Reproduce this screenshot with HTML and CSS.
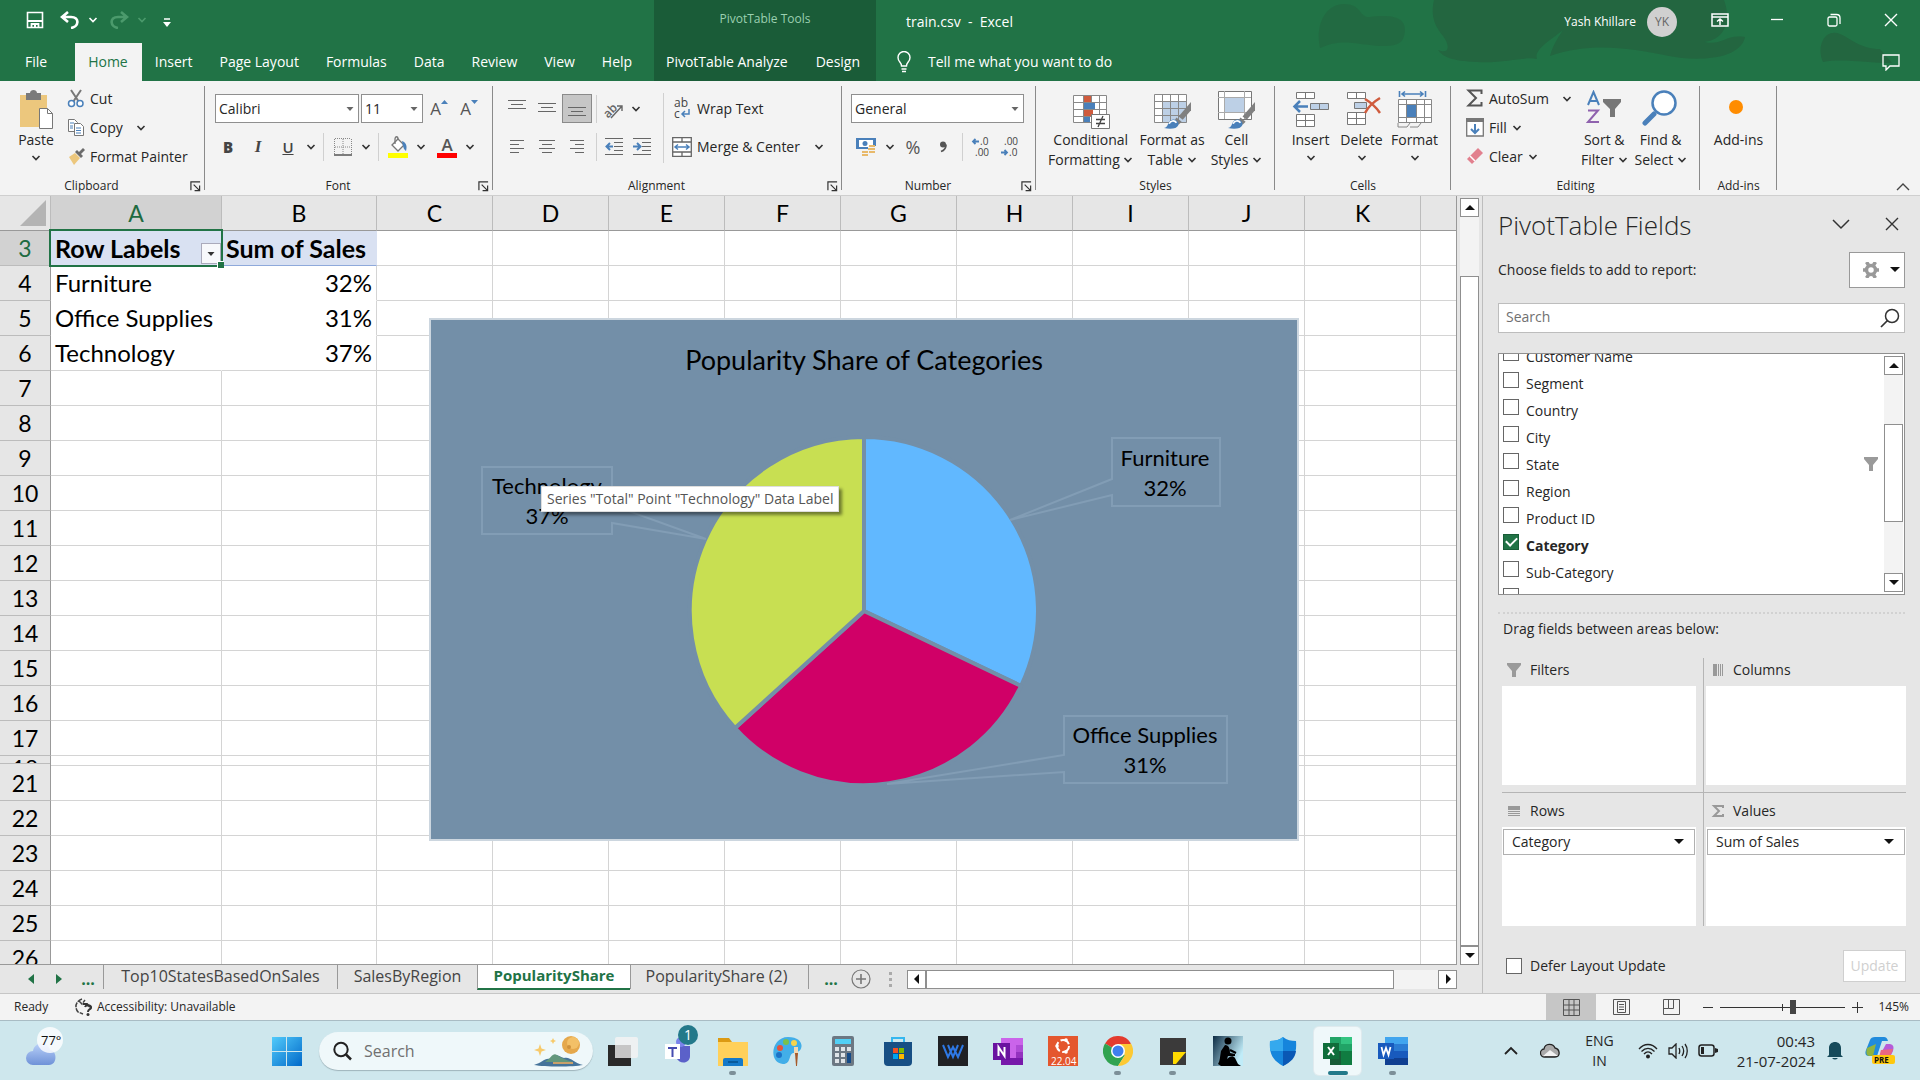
FILE: index.html
```html
<!DOCTYPE html>
<html lang="en">
<head>
<meta charset="utf-8">
<title>train.csv - Excel</title>
<link rel="stylesheet" href="styles.css">
</head>
<body>
<svg class="sprite" aria-hidden="true">
  <symbol id="chev" viewBox="0 0 10 10"><path d="M1.5 3l3.5 3.6L8.500 3" fill="none" stroke="currentColor" stroke-width="1.600"/></symbol>
  <symbol id="tri" viewBox="0 0 10 10"><path d="M1.500 3h7L5 7z" fill="currentColor"/></symbol>
  <symbol id="launch" viewBox="0 0 12 12"><path d="M1 10V1h10M4 4l6 6M10.500 5v5.500H5" fill="none" stroke="#333" stroke-width="1.300"/></symbol>
  <symbol id="funnel" viewBox="0 0 14 14"><path d="M0 0h14v2L9 8v6H5V8L0 2z" fill="#9a9a9a"/></symbol>
  <symbol id="brush" viewBox="0 0 26 26"><path d="M26 0v8l-8 9-4-3z" fill="#808080"/><path d="M12 15l5 4-3 3-4-4z" fill="#808080"/><path d="M0 25c5-1 3-7 8-8s9 5 3 8c-3 1-7 1-11 0z" fill="#4a80ba"/><path d="M5 21c1-3 5-4 7-1" fill="none" stroke="#fff" stroke-width="1.500"/></symbol>
</svg>

<header class="titlebar">
  <svg class="blobs" viewBox="0 0 620 81" aria-hidden="true"><g fill="#24633f"><path d="M20 48c-5-22 5-44 24-44 18 0 15 14 26 13 16-2 40-3 34 19-2 10-14 10-23 10-27-2-40-8-61 2z" opacity=".6"/><path d="M134 0h290c8 22 0 40-20 42 20 4 20-8 41-5-5 24-51 24-76 19-40-8-78-14-119 0 4-14 9-19 13-26-9 8-30 19-26 29-12-3-35 5-60 3-25-1-34-5-39-12 12 5 12-5 5-14-10-12-12-22-9-36z"/><path d="M523 62c-7-16 2-34 17-28 10 4 20 15 40 15l12 14c-25 0-50-5-69-1z"/></g></svg>
  <div class="main-tabs">
    <div class="qat">
      <button aria-label="Save"><svg width="18" height="18" viewBox="0 0 18 18"><path d="M1.500 1.500h15v15h-15z" fill="none" stroke="#fff" stroke-width="1.600"/><path d="M2 10h14M5.500 17v-4h7v4" fill="none" stroke="#fff" stroke-width="1.800"/><path d="M8 13h2v4H8z" fill="#fff"/></svg></button>
      <button aria-label="Undo"><svg width="20" height="18" viewBox="0 0 20 18"><path d="M8 1L2 6l6 5M2 6h9c9 0 8 10 0 11" fill="none" stroke="#fff" stroke-width="2.600"/></svg></button>
      <button class="list-btn" aria-label="Undo list"><svg class="ch"><use href="#chev"/></svg></button>
      <button class="dim" aria-label="Redo"><svg width="20" height="18" viewBox="0 0 20 18"><path d="M12 1l6 5-6 5M18 6H9C0 6 1 16 9 17" fill="none" stroke="currentColor" stroke-width="2.600"/></svg></button>
      <button class="dim list-btn" aria-label="Redo list"><svg class="ch"><use href="#chev"/></svg></button>
      <button class="custom" aria-label="Customize toolbar"><svg width="8" height="10" viewBox="0 0 8 10"><path d="M1 1h6" stroke="#fff" stroke-width="1.500"/><path d="M0 4h8L4 9z" fill="#fff"/></svg></button>
    </div>
    <nav class="tabs">
      <a class="file" href="#">File</a><a class="on" href="#">Home</a><a href="#">Insert</a><a href="#">Page Layout</a><a href="#">Formulas</a><a href="#">Data</a><a href="#">Review</a><a href="#">View</a><a href="#">Help</a>
    </nav>
  </div>
  <div class="context-tabs">
    <div class="context-name">PivotTable Tools</div>
    <nav class="tabs"><a href="#">PivotTable Analyze</a><a href="#">Design</a></nav>
  </div>
  <div class="title-rest">
    <div class="title-row">
      <span class="doc">train.csv&nbsp; -&nbsp; Excel</span>
      <span class="user">Yash Khillare</span><span class="avatar">YK</span>
      <div class="winbtns">
        <button aria-label="Ribbon display options"><svg width="18" height="14" viewBox="0 0 18 14"><path d="M1 1h16v12H1zM1 4h16M9 12V6M6 8.500L9 6l3 2.500" fill="none" stroke="#fff" stroke-width="1.500"/></svg></button>
        <button aria-label="Minimize"><svg width="14" height="14" viewBox="0 0 14 14"><path d="M1 6.500h12" stroke="#fff" stroke-width="1.300"/></svg></button>
        <button aria-label="Restore"><svg width="14" height="14" viewBox="0 0 14 14"><rect x="1" y="4" width="9" height="9" rx="1.500" fill="none" stroke="#fff" stroke-width="1.300"/><path d="M3.500 1.500h6q3.500 0 3.500 3.500v6" fill="none" stroke="#fff" stroke-width="1.300"/></svg></button>
        <button aria-label="Close"><svg width="14" height="14" viewBox="0 0 14 14"><path d="M1 1l12 12M13 1L1 13" stroke="#fff" stroke-width="1.400"/></svg></button>
      </div>
    </div>
    <div class="tell-row">
      <svg width="14" height="22" viewBox="0 0 14 22"><path d="M4.500 15c0-4-3.500-4-3.500-8.500a6 6 0 0 1 12 0C13 11 9.500 11 9.500 15zM4.500 18h5M5 20.500h4" fill="none" stroke="#fff" stroke-width="1.400"/></svg>
      <a href="#">Tell me what you want to do</a>
      <button class="comment" aria-label="Comments"><svg width="18" height="17" viewBox="0 0 18 17"><path d="M1 1h16v11H8l-4 4v-4H1z" fill="none" stroke="#fff" stroke-width="1.300"/></svg></button>
    </div>
  </div>
</header>

<section class="ribbon" aria-label="Home">
  <div class="group g-clip">
    <div class="body">
      <button class="big"><svg width="36" height="40" viewBox="0 0 36 40"><path d="M2 5h27v32H2z" fill="#ecc77d"/><path d="M8 3h4c0-4 7-4 7 0h4v7H8z" fill="#7a7a7a"/><path d="M21.500 18.500h8l5 5v15h-13z" fill="#fff" stroke="#777"/><path d="M29.500 18.500v5h5" fill="none" stroke="#777"/></svg><span>Paste</span><svg class="ch"><use href="#chev"/></svg></button>
      <div class="stack">
        <button><svg width="18" height="19" viewBox="0 0 18 19"><path d="M4 1l8 12M14 1L6 13" stroke="#777" stroke-width="2"/><g fill="#fff" stroke="#4a80ba" stroke-width="1.500"><circle cx="4.500" cy="14.500" r="3"/><circle cx="13" cy="14.500" r="3"/></g></svg>Cut</button>
        <button><svg width="18" height="19" viewBox="0 0 18 19"><g fill="#fff" stroke="#777"><path d="M1.500 1.500h6l3 3v9h-9z"/><path d="M7.500 5.500h6l3 3v9h-9z"/></g><path d="M3 5h4M3 8h3M3 10h3M9 10h5M9 12.500h5M9 15h5" stroke="#4a80ba"/></svg>Copy<svg class="ch far"><use href="#chev"/></svg></button>
        <button><svg width="18" height="19" viewBox="0 0 18 19"><path d="M2 10l6-4 5 5-6 7z" fill="#ecc77d"/><path d="M8 5l2-2 2 2 4-4 2 2-4 4 2 2-2 2z" fill="#6b6b6b"/></svg>Format Painter</button>
      </div>
    </div>
    <div class="label">Clipboard<button class="launch" aria-label="Clipboard settings"><svg><use href="#launch"/></svg></button></div>
  </div>
  <div class="group g-font">
    <div class="body rows">
      <div class="line combos">
        <button class="combo w-font">Calibri<svg class="ch"><use href="#tri"/></svg></button><button class="combo w-size">11<svg class="ch"><use href="#tri"/></svg></button>
        <button class="ib grow">A<svg width="7" height="5" viewBox="0 0 7 5"><path d="M0 4l3.500-4L7 4z" fill="#4a80ba"/></svg></button>
        <button class="ib grow">A<svg width="7" height="5" viewBox="0 0 7 5"><path d="M0 0l3.500 4L7 0z" fill="#4a80ba"/></svg></button>
      </div>
      <div class="line">
        <button class="ib glyph"><b>B</b></button><button class="ib glyph serif"><i>I</i></button><button class="ib glyph"><u>U</u></button><button class="dd" aria-label="Underline list"><svg class="ch"><use href="#chev"/></svg></button><span class="sep"></span>
        <button class="ib" aria-label="Borders"><svg width="18" height="18" viewBox="0 0 18 18"><path d="M.5 1v16M17.500 1v16M1 .5h16M9 1v16M1 9h16" stroke="#888" stroke-dasharray="1 1" fill="none"/><path d="M0 17h18" stroke="#555" stroke-width="1.500"/></svg></button><button class="dd" aria-label="Borders list"><svg class="ch"><use href="#chev"/></svg></button><span class="sep"></span>
        <button class="ib" aria-label="Fill colour"><svg width="22" height="22" viewBox="0 0 22 22"><path d="M5 9l6-6 6 6-6 6z" fill="#fff" stroke="#777" stroke-width="1.300"/><path d="M8 8V3c0-3 3-3 3 0" fill="none" stroke="#777" stroke-width="1.300"/><path d="M15 5c5 2 5 6 4 10-2-1-3-4-4-10z" fill="#4a80ba"/><path d="M1 17h20v5H1z" fill="#ff0"/></svg></button><button class="dd" aria-label="Fill list"><svg class="ch"><use href="#chev"/></svg></button>
        <button class="ib fontcolor">A</button><button class="dd" aria-label="Font colour list"><svg class="ch"><use href="#chev"/></svg></button>
      </div>
    </div>
    <div class="label">Font<button class="launch" aria-label="Font settings"><svg><use href="#launch"/></svg></button></div>
  </div>
  <div class="group g-align">
    <div class="body">
      <div class="rows left">
        <div class="line">
          <button class="ib" aria-label="Top align"><svg class="al"><path d="M0 1.500h18M3 5.500h12M0 9.500h18"/></svg></button><button class="ib" aria-label="Middle align"><svg class="al"><path d="M0 4.500h18M3 8.500h12M0 12.500h18"/></svg></button><button class="ib pressed" aria-label="Bottom align"><svg class="al"><path d="M0 8.500h18M3 12.500h12M0 16.500h18"/></svg></button><span class="sep"></span>
          <button class="ib slim" aria-label="Orientation"><svg width="20" height="20" viewBox="0 0 20 20"><text x="-1" y="16" transform="rotate(-45 6 12)" font-size="12" font-weight="600" fill="#666">ab</text><path d="M7 19L18 7M13 7h5v5" fill="none" stroke="#666" stroke-width="1.400"/></svg></button><button class="dd" aria-label="Orientation list"><svg class="ch"><use href="#chev"/></svg></button>
        </div>
        <div class="line">
          <button class="ib" aria-label="Align left"><svg class="al"><path d="M2 3.500h14M2 7.500h9M2 11.500h14M2 15.500h9"/></svg></button><button class="ib" aria-label="Centre"><svg class="al"><path d="M1 3.500h16M4 7.500h10M1 11.500h16M4 15.500h10"/></svg></button><button class="ib" aria-label="Align right"><svg class="al"><path d="M2 3.500h14M7 7.500h9M2 11.500h14M7 15.500h9"/></svg></button><span class="sep"></span>
          <button class="ib slim" aria-label="Decrease indent"><svg class="al"><path d="M0 1.500h18M9 5.500h9M9 9.500h9M9 13.500h9M0 17.500h18"/><path class="arr" d="M8 9.500H2M5 6L1.500 9.500 5 13"/></svg></button><button class="ib slim" aria-label="Increase indent"><svg class="al"><path d="M0 1.500h18M9 5.500h9M9 9.500h9M9 13.500h9M0 17.500h18"/><path class="arr" d="M0 9.500h7M4 6l3.500 3.500L4 13"/></svg></button>
        </div>
      </div>
      <span class="sep tall"></span>
      <div class="rows">
        <button class="line text"><svg width="20" height="24" viewBox="0 0 20 24"><text x="2" y="10" font-size="12" fill="#444">ab</text><text x="2" y="21" font-size="12" fill="#444">c</text><path d="M17 12v5h-6M13 14l-3 3 3 3" fill="none" stroke="#4a80ba" stroke-width="1.500"/></svg>Wrap Text</button>
        <button class="line text"><svg width="20" height="20" viewBox="0 0 20 20"><path d="M.7.7h18.600v18.600H.7zM.7 5h18.600M.7 15h18.600M10 1v4M10 15v4" fill="#fff" stroke="#666" stroke-width="1.300"/><path d="M3 10h14M6 7.500L3 10l3 2.500M14 7.500l3 2.500-3 2.500" fill="none" stroke="#4a80ba" stroke-width="1.500"/></svg>Merge &amp; Center<svg class="ch far"><use href="#chev"/></svg></button>
      </div>
    </div>
    <div class="label">Alignment<button class="launch" aria-label="Alignment settings"><svg><use href="#launch"/></svg></button></div>
  </div>
  <div class="group g-num">
    <div class="body rows">
      <div class="line"><button class="combo w-num">General<svg class="ch"><use href="#tri"/></svg></button></div>
      <div class="line">
        <button class="ib" aria-label="Accounting format"><svg width="20" height="20" viewBox="0 0 20 20"><path d="M0 1h20v11H0z" fill="#4a80ba"/><path d="M3 3h14v7H3z" fill="#fff"/><circle cx="9" cy="6.500" r="2.500" fill="#4a80ba"/><path d="M12 9h8v9h-8z" fill="#f3f3f3"/><path d="M13 9h6M12 12h7M13 15h6M6 15h6M6 18h6" stroke="#e8b96a" stroke-width="2"/></svg></button><button class="dd" aria-label="Currency list"><svg class="ch"><use href="#chev"/></svg></button>
        <button class="ib pct">%</button><button class="ib" aria-label="Comma style"><svg width="8" height="12" viewBox="0 0 8 12"><circle cx="4" cy="3.500" r="3" fill="#555"/><path d="M7 3.500c0 4-2 6-5 7" fill="none" stroke="#555" stroke-width="1.800"/></svg></button><span class="sep"></span>
        <button class="ib dec" aria-label="Increase decimal"><svg width="22" height="22" viewBox="0 0 22 22"><text x="10" y="9" font-size="10">.0</text><text x="5" y="20" font-size="10">.00</text><path d="M9 5.500H3M5.500 3L3 5.500 5.500 8" fill="none" stroke="#4a80ba" stroke-width="1.800"/></svg></button><button class="ib dec" aria-label="Decrease decimal"><svg width="22" height="22" viewBox="0 0 22 22"><text x="4" y="9" font-size="10">.00</text><text x="9" y="20" font-size="10">.0</text><path d="M1 16.500h6M4.500 14L7 16.500 4.500 19" fill="none" stroke="#4a80ba" stroke-width="1.800"/></svg></button>
      </div>
    </div>
    <div class="label">Number<button class="launch" aria-label="Number settings"><svg><use href="#launch"/></svg></button></div>
  </div>
  <div class="group g-styles">
    <div class="body">
      <button class="big"><svg width="38" height="40" viewBox="0 0 38 40"><path d="M1.500 5.500h33v27h-33z" fill="#fff"/><path d="M12 5h7v7h-7zM12 20h9v6h-9z" fill="#cf5b3d"/><path d="M12 12h11v7H12zM12 27h6v6h-6z" fill="#4a80ba"/><path d="M1.500 5.500h33v27h-33zM1 12.500h33M1 19.500h33M1 26.500h33M11.500 5v28M19.500 5v7M27.500 5v28" fill="none" stroke="#888"/><path d="M19.500 24.500h18v14h-18z" fill="#fff" stroke="#777"/><path d="M24 29.500h9M24 33.500h9M31 26l-5 11" stroke="#444" stroke-width="1.300"/></svg><span>Conditional<br>Formatting <svg class="ch"><use href="#chev"/></svg></span></button>
      <button class="big"><svg width="38" height="40" viewBox="0 0 38 40"><path d="M1.500 4.500h32v28h-32z" fill="#fff"/><path d="M9 11h25v22H9z" fill="#bdd0e6"/><path d="M1.500 4.500h32v28h-32zM1 11.500h32M1 18.500h32M1 25.500h32M9.500 4v28M17.500 4v28M25.500 4v28" fill="none" stroke="#888"/><use href="#brush" x="11" y="12" width="27" height="27"/></svg><span>Format as<br>Table <svg class="ch"><use href="#chev"/></svg></span></button>
      <button class="big"><svg width="38" height="40" viewBox="0 0 38 40"><path d="M1.500 1.500h33v28h-33z" fill="#fff" stroke="#777"/><path d="M8 8h19v14H8z" fill="#bdd0e6"/><path d="M1 7.500h33M1 22.500h33M7.500 1v28M27.500 1v28" stroke="#aaa"/><use href="#brush" x="11" y="12" width="27" height="27"/></svg><span>Cell<br>Styles <svg class="ch"><use href="#chev"/></svg></span></button>
    </div>
    <div class="label">Styles</div>
  </div>
  <div class="group g-cells">
    <div class="body">
      <button class="big"><svg width="38" height="40" viewBox="0 0 38 40"><path d="M4.500 2.500h18v6h-18zM13.500 2v6M4.500 24.500h18v12h-18zM4 30.500h18M13.500 24v12" fill="#fff" stroke="#777"/><path d="M18.500 13.500h18v6h-18z" fill="#bdd0e6" stroke="#777"/><path d="M27.500 14v5" stroke="#777"/><path d="M16 16.500H4M8 11l-5.500 5.500L8 22" fill="none" stroke="#4a80ba" stroke-width="2.500"/></svg><span>Insert</span><svg class="ch"><use href="#chev"/></svg></button>
      <button class="big"><svg width="38" height="40" viewBox="0 0 38 40"><path d="M4.500 2.500h18v6h-18zM13.500 2v6M4.500 22.500h18v12h-18zM4 28.500h18M13.500 22v12" fill="#fff" stroke="#777"/><path d="M11.500 12.500h12v6h-12z" fill="#bdd0e6" stroke="#777"/><path d="M22 9c5 3 11 8 15 14M37 8c-5 3-12 9-15 15" fill="none" stroke="#cf5b3d" stroke-width="2.500"/></svg><span>Delete</span><svg class="ch"><use href="#chev"/></svg></button>
      <button class="big"><svg width="38" height="40" viewBox="0 0 38 40"><path d="M2.500 9.500h33v23h-33z" fill="#fff"/><path d="M11 15h9v12h-9z" fill="#4a80ba"/><path d="M2.500 9.500h33v23h-33zM2 14.500h33M2 27.500h33M10.500 9v23M20.500 9v23M28.500 9v23" fill="none" stroke="#888"/><path d="M2 33v4h9l3-4M14 37h8l3-4" fill="none" stroke="#888"/><path d="M3.500 1v6M29.500 1v6M6 4h21M9 1.500L6 4l3 2.500M24 1.500L27 4l-3 2.500" fill="none" stroke="#4a80ba" stroke-width="1.600"/></svg><span>Format</span><svg class="ch"><use href="#chev"/></svg></button>
    </div>
    <div class="label">Cells</div>
  </div>
  <div class="group g-edit">
    <div class="body">
      <div class="stack">
        <button><svg width="18" height="19" viewBox="0 0 18 19"><path d="M15.500 5V1.500H2.500L10 9l-7.500 7.500h13V13" fill="none" stroke="#555" stroke-width="2"/></svg>AutoSum<svg class="ch far"><use href="#chev"/></svg></button>
        <button><svg width="18" height="19" viewBox="0 0 18 19"><path d="M.7 1h16.600v17H.7z" fill="#fff" stroke="#777" stroke-width="1.300"/><path d="M0 0h18v4H0z" fill="#777"/><path d="M9 6v9M5 11l4 4 4-4" fill="none" stroke="#4a80ba" stroke-width="2"/></svg>Fill<svg class="ch"><use href="#chev"/></svg></button>
        <button><svg width="18" height="19" viewBox="0 0 18 19"><path d="M1 12L12 1l5 5L6 17z" fill="#e2808e"/><path d="M4 9l5 5" stroke="#fff" stroke-width="1.500"/></svg>Clear<svg class="ch"><use href="#chev"/></svg></button>
      </div>
      <button class="big"><svg width="38" height="40" viewBox="0 0 38 40"><g fill="none" stroke-width="2"><path d="M3 15L8.500 2 14 15M5 11h7" stroke="#4a80ba"/><path d="M3 20.500h10L3 32h11" stroke="#8f62ae"/></g><path d="M18 9h18v3l-6 7v8h-5v-8l-7-7z" fill="#777"/></svg><span>Sort &amp;<br>Filter <svg class="ch"><use href="#chev"/></svg></span></button>
      <button class="big"><svg width="38" height="40" viewBox="0 0 38 40"><path d="M12 24L3 33" stroke="#4a80ba" stroke-width="5" stroke-linecap="round"/><circle cx="22" cy="13" r="11.500" fill="#fff" stroke="#4a80ba" stroke-width="2.500"/></svg><span>Find &amp;<br>Select <svg class="ch"><use href="#chev"/></svg></span></button>
    </div>
    <div class="label">Editing</div>
  </div>
  <div class="group g-add">
    <div class="body"><button class="big"><svg width="38" height="40" viewBox="0 0 38 40"><circle cx="16" cy="17" r="7" fill="#ff8c00"/></svg><span>Add-ins</span></button></div>
    <div class="label">Add-ins</div>
  </div>
  <button class="collapse" aria-label="Collapse ribbon"><svg width="14" height="8" viewBox="0 0 14 8"><path d="M1 7l6-6 6 6" fill="none" stroke="#444" stroke-width="1.400"/></svg></button>
</section>

<main class="work">
  <section class="book">
    <div class="grid-area">
      <div class="sheet">
        <table>
          <colgroup><col class="c-row"><col class="c-a"><col class="c-b"><col class="c-n"><col class="c-n"><col class="c-n"><col class="c-n"><col class="c-n"><col class="c-n"><col class="c-n"><col class="c-n"><col class="c-n"><col class="c-n"></colgroup>
          <thead><tr><th class="corner"><svg width="28" height="28" viewBox="0 0 28 28"><path d="M27 1v26H1z" fill="#b4b4b4"/></svg></th><th class="sel">A</th><th>B</th><th>C</th><th>D</th><th>E</th><th>F</th><th>G</th><th>H</th><th>I</th><th>J</th><th>K</th><th></th></tr></thead>
          <tbody>
          <tr><th class="sel">3<td class="head picked">Row Labels<button class="filter" aria-label="Filter row labels"><svg class="ch"><use href="#tri"/></svg></button><td class="head">Sum of Sales<td><td><td><td><td><td><td><td><td><td>
          <tr class="piv"><th>4<td>Furniture<td>32%<td><td><td><td><td><td><td><td><td><td>
          <tr class="piv"><th>5<td>Office Supplies<td>31%<td><td><td><td><td><td><td><td><td><td>
          <tr class="piv last"><th>6<td>Technology<td>37%<td><td><td><td><td><td><td><td><td><td>
          <tr><th>7<td><td><td><td><td><td><td><td><td><td><td><td>
          <tr><th>8<td><td><td><td><td><td><td><td><td><td><td><td>
          <tr><th>9<td><td><td><td><td><td><td><td><td><td><td><td>
          <tr><th>10<td><td><td><td><td><td><td><td><td><td><td><td>
          <tr><th>11<td><td><td><td><td><td><td><td><td><td><td><td>
          <tr><th>12<td><td><td><td><td><td><td><td><td><td><td><td>
          <tr><th>13<td><td><td><td><td><td><td><td><td><td><td><td>
          <tr><th>14<td><td><td><td><td><td><td><td><td><td><td><td>
          <tr><th>15<td><td><td><td><td><td><td><td><td><td><td><td>
          <tr><th>16<td><td><td><td><td><td><td><td><td><td><td><td>
          <tr><th>17<td><td><td><td><td><td><td><td><td><td><td><td>
          <tr class="short"><th><div>18</div><td><td><td><td><td><td><td><td><td><td><td><td>
          <tr><th>21<td><td><td><td><td><td><td><td><td><td><td><td>
          <tr><th>22<td><td><td><td><td><td><td><td><td><td><td><td>
          <tr><th>23<td><td><td><td><td><td><td><td><td><td><td><td>
          <tr><th>24<td><td><td><td><td><td><td><td><td><td><td><td>
          <tr><th>25<td><td><td><td><td><td><td><td><td><td><td><td>
          <tr><th>26<td><td><td><td><td><td><td><td><td><td><td><td>
          </tbody>
        </table>
        <figure class="chart">
          <svg width="866" height="519" viewBox="0 0 866 519" role="img" aria-label="Popularity Share of Categories">
            <text class="ctitle" x="433" y="50">Popularity Share of Categories</text>
            <g stroke="#738fa8" stroke-width="4" stroke-linejoin="round">
              <path d="M433 291V117a174 174 0 0 1 157 249z" fill="#61b8ff"/>
              <path d="M433 291l157 75a174 174 0 0 1-286 42z" fill="#d00067"/>
              <path d="M433 291L304 408A174 174 0 0 1 433 117z" fill="#c8df52"/>
            </g>
            <g fill="none" stroke="#829db5" stroke-width="2">
              <path d="M681 118h108v68H681v-11l-102 25 102-41z"/>
              <path d="M51 147h130v38l94 34-94-16v11H51z"/>
              <path d="M633 396h163v67H633v-11l-177 12 177-29z"/>
            </g>
            <g class="clabel"><text x="734" y="146">Furniture</text><text x="734" y="176">32%</text><text x="116" y="174">Technology</text><text x="116" y="204">37%</text><text x="714" y="423">Office Supplies</text><text x="714" y="453">31%</text></g>
          </svg>
          <div class="tip">Series "Total" Point "Technology" Data Label</div>
        </figure>
      </div>
      <div class="vscroll"><button aria-label="Scroll up"><svg class="sa"><path d="M0 7l5-5 5 5z"/></svg></button><div class="track"><div class="thumb"></div></div><button aria-label="Scroll down"><svg class="sa"><path d="M0 2l5 5 5-5z"/></svg></button></div>
    </div>
    <div class="sheetbar">
      <button class="nav" aria-label="Previous sheets"><svg width="6" height="10"><path d="M6 0v10L0 5z" fill="#217346"/></svg></button><button class="nav" aria-label="Next sheets"><svg width="6" height="10"><path d="M0 0v10l6-5z" fill="#217346"/></svg></button><button class="dots">...</button>
      <div class="sheets"><a class="t1" href="#">Top10StatesBasedOnSales</a><a class="t2" href="#">SalesByRegion</a><a class="t3 on" href="#">PopularityShare</a><a class="t4" href="#">PopularityShare (2)</a></div>
      <button class="dots more">...</button><button class="add" aria-label="New sheet"><svg width="20" height="20" viewBox="0 0 20 20"><circle cx="10" cy="10" r="9" fill="none" stroke="#777" stroke-width="1.200"/><path d="M10 5v10M5 10h10" stroke="#777" stroke-width="1.600"/></svg></button>
      <svg class="grip" width="4" height="16"><path d="M0 1h3v3H0zM0 7h3v3H0zM0 13h3v3H0z" fill="#aaa"/></svg>
      <div class="hscroll"><button aria-label="Scroll left"><svg class="sa"><path d="M7 0v10L2 5z"/></svg></button><div class="track"><div class="thumb"></div></div><button aria-label="Scroll right"><svg class="sa"><path d="M3 0v10l5-5z"/></svg></button></div>
    </div>
  </section>

  <aside class="pane">
    <div class="pane-head"><h2>PivotTable Fields</h2><button aria-label="Pane options"><svg width="18" height="12" viewBox="0 0 18 12"><path d="M1 2l8 8 8-8" fill="none" stroke="#333" stroke-width="1.500"/></svg></button><button aria-label="Close pane"><svg width="14" height="14" viewBox="0 0 14 14"><path d="M1 1l12 12M13 1L1 13" stroke="#333" stroke-width="1.400"/></svg></button></div>
    <div class="choose"><span>Choose fields to add to report:</span><button class="gear" aria-label="Tools"><svg width="16" height="16" viewBox="0 0 16 16"><circle cx="8" cy="8" r="4.500" fill="none" stroke="#999" stroke-width="3.500"/><path d="M3.500 0l2 3M12.500 0l-2 3M3.500 16l2-3M12.500 16l-2-3M0 8h3M13 8h3" stroke="#999" stroke-width="3.500"/></svg><svg class="dn"><path d="M0 0h10L5 5z"/></svg></button></div>
    <div class="find"><input type="text" placeholder="Search" aria-label="Search fields"><svg width="20" height="20" viewBox="0 0 20 20"><circle cx="12" cy="8" r="6.500" fill="none" stroke="#333" stroke-width="1.500"/><path d="M7.500 12.500L1 19" stroke="#333" stroke-width="1.700"/></svg></div>
    <div class="fields">
      <div class="list">
        <label><input type="checkbox"><span>Customer Name</span></label>
        <label><input type="checkbox"><span>Segment</span></label>
        <label><input type="checkbox"><span>Country</span></label>
        <label><input type="checkbox"><span>City</span></label>
        <label><input type="checkbox"><span>State</span><svg class="fun"><use href="#funnel"/></svg></label>
        <label><input type="checkbox"><span>Region</span></label>
        <label><input type="checkbox"><span>Product ID</span></label>
        <label><input type="checkbox" checked><span><b>Category</b></span></label>
        <label><input type="checkbox"><span>Sub-Category</span></label>
        <label><input type="checkbox" aria-label="Next field"></label>
      </div>
      <div class="vscroll"><button aria-label="Scroll fields up"><svg class="sa"><path d="M0 7l5-5 5 5z"/></svg></button><div class="track"><div class="thumb"></div></div><button aria-label="Scroll fields down"><svg class="sa"><path d="M0 2l5 5 5-5z"/></svg></button></div>
    </div>
    <div class="split"></div>
    <p class="drag">Drag fields between areas below:</p>
    <div class="areas">
      <div class="area"><h3><svg width="14" height="14"><use href="#funnel"/></svg>Filters</h3><div class="drop"></div></div>
      <div class="area r"><h3><svg width="14" height="14"><path d="M2 1h4v12H2zM7 1h1v12H7zM9 1h1v12H9zM11 1h1v12h-1z" fill="#999"/></svg>Columns</h3><div class="drop"></div></div>
      <div class="area b"><h3><svg width="14" height="14"><path d="M1 2h12v4H1zM1 7h12v1H1zM1 9h12v1H1zM1 11h12v1H1z" fill="#999"/></svg>Rows</h3><div class="drop"><button>Category<svg class="dn"><path d="M0 0h10L5 5z"/></svg></button></div></div>
      <div class="area r b"><h3><svg width="14" height="14"><path d="M12 4V2H3l5 5-5 5h9v-2" fill="none" stroke="#999" stroke-width="2"/></svg>Values</h3><div class="drop"><button>Sum of Sales<svg class="dn"><path d="M0 0h10L5 5z"/></svg></button></div></div>
    </div>
    <div class="defer"><label><input type="checkbox"><span>Defer Layout Update</span></label><button disabled>Update</button></div>
  </aside>
</main>

<div class="status">
  <span class="ready">Ready</span>
  <svg width="20" height="18" viewBox="0 0 20 18"><path d="M8 1C2 3 0 9 4 14l5 2M5 3l3 3 3-4" fill="none" stroke="#444" stroke-width="1.500" stroke-dasharray="5 1"/><path d="M9 6h4l3 3M11 9c1-3 7-2 6 1-1 2-3 1-3 4" fill="none" stroke="#333" stroke-width="2"/><circle cx="14" cy="16.500" r="1.500" fill="#333"/></svg>
  <span class="acc">Accessibility: Unavailable</span>
  <div class="views">
    <button class="on" aria-label="Normal"><svg width="17" height="17"><path d="M.5.500h16v16H.5zM.5 6h16M.5 11h16M6 .5v16M11 .5v16" fill="none" stroke="#555"/></svg></button>
    <button aria-label="Page layout"><svg width="17" height="17"><path d="M.5.500h16v15H.5zM4.500 2.500h8v11h-8zM6 5.500h5M6 8h5M6 10.500h5" fill="none" stroke="#555"/></svg></button>
    <button aria-label="Page break"><svg width="17" height="17"><path d="M.5.500h16v15H.5zM5.500.500v9h-5M5.500 9.500h5v-9" fill="none" stroke="#555"/></svg></button>
  </div>
  <button class="z" aria-label="Zoom out"><svg width="10" height="10"><path d="M0 5.500h10" stroke="#333"/></svg></button>
  <input class="zoom" type="range" min="0" max="100" value="58" aria-label="Zoom">
  <button class="z" aria-label="Zoom in"><svg width="11" height="11"><path d="M0 5.500h11M5.500 0v11" stroke="#333"/></svg></button>
  <span class="pc">145%</span>
</div>

<footer class="taskbar">
  <button class="weather" aria-label="Weather"><svg width="42" height="40" viewBox="0 0 42 40"><defs><linearGradient id="cl" x2="0" y2="1"><stop stop-color="#b9d0f8"/><stop offset="1" stop-color="#6f92d8"/></linearGradient></defs><path d="M9 38a7 7 0 0 1 0-14c2-10 15-10 17-1 7 0 8 15-1 15z" fill="url(#cl)"/><circle cx="26" cy="13" r="13" fill="#fff" opacity=".8"/><text x="17" y="18" font-size="13" fill="#111">77°</text></svg></button>
  <button class="start" aria-label="Start"><svg width="30" height="30" viewBox="0 0 30 30"><defs><linearGradient id="win" x2="1" y2="1"><stop stop-color="#52cbfb"/><stop offset="1" stop-color="#0169c9"/></linearGradient></defs><path d="M0 1h14v14H0zM15 1h15v14H15zM0 16h14v14H0zM15 16h15v14H15z" fill="url(#win)"/></svg></button>
  <label class="search"><svg width="20" height="20" viewBox="0 0 20 20"><circle cx="9" cy="8.500" r="6.700" fill="none" stroke="#222" stroke-width="2"/><path d="M14 13.500l5 5" stroke="#222" stroke-width="2.500"/></svg><input type="text" placeholder="Search" aria-label="Search Windows"><svg width="52" height="32" viewBox="0 0 52 32"><path d="M1 30c8-2 10-7 16-6 6-8 9-2 14-1 6-2 10 5 19 7-10 2-38 2-49 0z" fill="#45739a"/><path d="M12 27c6-4 8-10 12-7s12 6 16 7z" fill="#62977c"/><path d="M20 28h20" stroke="#c9a06a" stroke-width="2"/><ellipse cx="38" cy="10" rx="9" ry="9" fill="#e5a84c"/><circle cx="40" cy="8" r="6" fill="#f3c067"/><circle cx="36" cy="12" r="2" fill="#cf913b"/><path d="M7 9l1.500 4.500L13 15l-4.500 1.500L7 21l-1.500-4.500L1 15l4.500-1.500zM20 3l1 2 2 1-2 1-1 2-1-2-2-1 2-1z" fill="#f7ca6b"/></svg></label>
  <div class="apps">
    <button aria-label="Task view"><svg viewBox="0 0 30 30"><path d="M0 9h23v21H0z" fill="#292929"/><rect x="7" y="1" width="23" height="21" rx="2" fill="#f2f2f2" opacity=".88"/><path d="M7 9h16v13H7z" fill="#c6c6c6"/></svg></button>
    <button aria-label="Teams"><svg viewBox="0 0 30 30"><path d="M12 10h15v10c0 8-11 9-14 1z" fill="#5b61c9"/><circle cx="18" cy="6" r="5" fill="#7b83eb"/><path d="M2 8h15v15H2z" fill="#fff"/><path d="M5 11h9v2h-3.500v8h-2v-8H5z" fill="#454bb0"/></svg><em>1</em></button>
    <button class="run" aria-label="File Explorer"><svg viewBox="0 0 30 30"><path d="M0 2h11l3 4H0z" fill="#dc9a13"/><path d="M0 6h30v24H0z" fill="#ffd05a"/><path d="M5 30v-6q0-2 2-2h16q2 0 2 2v6z" fill="#1479c9"/><path d="M10 26h10" stroke="#075a9c" stroke-width="2"/></svg></button>
    <button aria-label="Paint"><svg viewBox="0 0 30 30"><path d="M15 1c18 0 16 16 6 16-6 0-2 11-11 11C-5 27-2 1 15 1z" fill="#42aee8"/><circle cx="7" cy="12" r="3" fill="#e5533d"/><circle cx="13" cy="6" r="3" fill="#79c14c"/><circle cx="21" cy="7" r="3" fill="#f8d44b"/><circle cx="6" cy="19" r="3" fill="#1b73c7"/><path d="M21 11h4v7h-4z" fill="#f2d8b2"/><path d="M22 17h3l-1 13h-1z" fill="#a65a2a"/></svg></button>
    <button aria-label="Calculator"><svg viewBox="0 0 30 30"><rect x="4" width="22" height="30" rx="2" fill="#6c7883"/><path d="M7 3h16v5H7z" fill="#52d0f5"/><path d="M7 11h4v4H7zM13 11h4v4h-4zM19 11h4v4h-4zM7 17h4v4H7zM13 17h4v4h-4zM7 23h4v4H7zM13 23h4v4h-4z" fill="#dfe4e8"/><path d="M19 17h4v10h-4z" fill="#164b87"/></svg></button>
    <button aria-label="Store"><svg viewBox="0 0 30 30"><path d="M9 6V2h12v4" fill="none" stroke="#35b7ef" stroke-width="2"/><path d="M1 6h28v20q0 4-4 4H5q-4 0-4-4z" fill="#174f84"/><path d="M10 12h5v5h-5z" fill="#f25022"/><path d="M16 12h5v5h-5z" fill="#7fba00"/><path d="M10 18h5v5h-5z" fill="#00a4ef"/><path d="M16 18h5v5h-5z" fill="#ffb900"/></svg></button>
    <button aria-label="W app"><svg viewBox="0 0 30 30"><path d="M0 0h30v30H0z" fill="#202124"/><path d="M5 9l5 12 5-10 5 10 5-12M10 9l5 12 5-12" fill="none" stroke="#2e78e4" stroke-width="2"/></svg></button>
    <button aria-label="OneNote"><svg viewBox="0 0 30 30"><path d="M8 2h22v27H8z" fill="#ca64ea"/><path d="M23 9h7v7h-7z" fill="#ae4bd5"/><path d="M23 16h7v7h-7z" fill="#9332bf"/><path d="M8 22h22v7H8z" fill="#7719aa"/><path d="M0 7h17v17H0z" fill="#6a12a0"/><path d="M5.500 20v-9l6 9v-9" fill="none" stroke="#fff" stroke-width="2"/></svg></button>
    <button aria-label="Ubuntu"><svg viewBox="0 0 30 30"><path d="M0 0h30v30H0z" fill="#e4572e"/><circle cx="15" cy="10" r="6" fill="none" stroke="#fff" stroke-width="2" stroke-dasharray="10 2.500"/><circle cx="9" cy="10" r="1.800" fill="#fff"/><circle cx="18" cy="4" r="1.800" fill="#fff"/><circle cx="18" cy="16" r="1.800" fill="#fff"/><text x="3" y="29" font-size="10" fill="#fff">22.04</text></svg></button>
    <button class="run" aria-label="Chrome"><svg viewBox="0 0 30 30"><path d="M15 15L2 7.500A15 15 0 0 1 28 7.500z" fill="#e33b2e"/><path d="M15 15L2 7.500A15 15 0 0 0 15 30l7-11z" fill="#30a350"/><path d="M15 15l13-7.500A15 15 0 0 1 15 30l7-11z" fill="#fcc934"/><path d="M15 8h13v3H15z" fill="#fcc934"/><circle cx="15" cy="15" r="7" fill="#fff"/><circle cx="15" cy="15" r="5.500" fill="#3f7fee"/></svg></button>
    <button class="run" aria-label="Sticky Notes"><svg viewBox="0 0 30 30"><path d="M2 2h26v27H2z" fill="#3b3a3a"/><path d="M15 16h13L18 28h-3z" fill="#ffda00"/></svg></button>
    <button aria-label="Kindle"><svg viewBox="0 0 30 30"><defs><linearGradient id="kin" x2="1" y2=".5"><stop stop-color="#0d2c44"/><stop offset="1" stop-color="#c0ecf8"/></linearGradient></defs><path d="M0 0h30v30H0z" fill="url(#kin)"/><circle cx="15" cy="5" r="3.500"/><path d="M12 9c4 0 5 4 5 8l5 1v2h-7l-1 3c3-3 6-4 8-1l3 6 3 2H8l-3-2c2-3 2-8 3-13z"/><path d="M17 14l6 3" stroke="#000" stroke-width="2"/></svg></button>
    <button aria-label="Security"><svg viewBox="0 0 30 30"><path d="M15 1c4 3 8 4 13 4 1 12-2 19-13 25C4 24 1 17 2 5c5 0 9-1 13-4z" fill="#1685dc"/><path d="M15 1v14H2V5c5 0 9-1 13-4z" fill="#35a9ee"/><path d="M15 15h13c-1 7-5 11-13 15z" fill="#0a58b5"/></svg></button>
    <button class="run active" aria-label="Excel"><svg viewBox="0 0 30 30"><path d="M7 1h22v28H7z" fill="#21a366"/><path d="M18 1h11v7H18z" fill="#33c481"/><path d="M7 15h22v14H7z" fill="#107c41"/><path d="M7 15h11v14H7z" fill="#185c37"/><path d="M0 7h16v16H0z" fill="#0f6d3a"/><path d="M5 11l6 8M11 11l-6 8" stroke="#fff" stroke-width="2"/></svg></button>
    <button class="run" aria-label="Word"><svg viewBox="0 0 30 30"><path d="M7 1h23v28H7z" fill="#2b7cd3"/><path d="M7 1h23v7H7z" fill="#41a5ee"/><path d="M7 15h23v7H7z" fill="#185abd"/><path d="M7 22h23v7H7z" fill="#103f91"/><path d="M0 7h16v16H0z" fill="#185abd"/><path d="M3.500 11l2 8L8 12l2.500 7 2-8" fill="none" stroke="#fff" stroke-width="1.800"/></svg></button>
  </div>
  <div class="tray">
    <svg width="14" height="10" viewBox="0 0 14 10"><path d="M1 8l6-6 6 6" fill="none" stroke="#222" stroke-width="1.800"/></svg>
    <svg width="20" height="15" viewBox="0 0 20 15"><path d="M5 14a4 4 0 0 1-1-8c1-6 9-6 11-1 5 1 6 9 0 9z" fill="#aaa" stroke="#222" stroke-width="1.300"/><path d="M3 13l7-6 8 6z" fill="#f2f2f2"/></svg>
    <div class="lang">ENG<br>IN</div>
    <svg width="20" height="16" viewBox="0 0 20 16"><path d="M1 6c5-6 13-6 18 0M3.500 8.500c4-4 9-4 13 0M6 11c3-3 5-3 8 0" fill="none" stroke="#222" stroke-width="1.300"/><circle cx="10" cy="13.500" r="2" fill="#222"/></svg>
    <svg width="20" height="16" viewBox="0 0 20 16"><path d="M1 5h3l4-4v14l-4-4H1zM11 5c1 2 1 4 0 6M14 3c2 3 2 7 0 10M17 1c3 4 3 10 0 14" fill="none" stroke="#222" stroke-width="1.300"/></svg>
    <svg width="20" height="14" viewBox="0 0 20 14"><rect x="1" y="1" width="15" height="11" rx="2.500" fill="none" stroke="#222" stroke-width="1.500"/><path d="M3 3h3v7H3zM17 4l3 1v3l-3 1z" fill="#222"/></svg>
    <div class="clock">00:43<br>21-07-2024</div>
    <svg width="16" height="20" viewBox="0 0 16 20"><path d="M2 14V7c0-8 12-8 12 0v7l2 2H0z" fill="#174b5b"/><path d="M5 17h6q-3 3-6 0z" fill="#174b5b"/></svg>
    <svg class="pilot" width="30" height="30" viewBox="0 0 30 30"><path d="M10 1h9q3 0 4 4h-6l-5 15H4q-5 0-3-6L5 4q1-3 5-3z" fill="#218bdc"/><path d="M2 12l9-4-3 12H4q-4-1-2-8z" fill="#91b43f"/><path d="M21 8h4q5 1 3 7l-2 4q-2 4-8 4h-7l3-2z" fill="#b65bd8"/><path d="M16 14l12-1-3 8H14z" fill="#ea6783"/><rect x="7" y="19" width="23" height="9" rx="2" fill="#ffc80d"/><text x="9" y="27" font-size="8" font-weight="700" fill="#111">PRE</text></svg>
  </div>
</footer>
</body>
</html>
```
FILE: styles.css
```css
* { box-sizing: border-box; }
html, body { margin: 0; height: 100%; }
body { display: flex; flex-direction: column; font: 14px/20px "Open Sans", "Noto Sans", sans-serif; color: #262626; overflow: hidden; background: #e6e6e6; }
button { font: inherit; color: inherit; background: none; border: 0; padding: 0; display: flex; align-items: center; justify-content: center; }
a { color: inherit; text-decoration: none; }
input { font: inherit; color: inherit; }
h2, h3, p, figure { margin: 0; font-weight: 400; }
.sprite { position: absolute; width: 0; height: 0; }
.ch { width: 10px; height: 10px; flex: none; color: #333; }

/* title bar */
.titlebar { position: relative; display: flex; flex: none; height: 81px; background: #217346; color: #fff; }
.blobs { position: absolute; right: 0; top: 0; width: 620px; height: 81px; opacity: .8; }
.main-tabs { width: 654px; display: flex; flex-direction: column; }
.qat { flex: 1; display: flex; align-items: center; padding: 0 0 4px 26px; }
.qat .ch { color: #fff; }
.qat button { margin-left: 16px; }
.qat button:first-child { margin-left: 0; }
.qat .list-btn { margin-left: 8px; }
.qat .dim, .qat .dim .ch { color: #4b9a6c; }
.qat .list-btn + .dim { margin-left: 11px; }
.qat .custom { padding-top: 6px; }
.tabs { display: flex; height: 38px; }
.tabs a { padding: 0 14px 0 13px; line-height: 38px; white-space: nowrap; }
.tabs .file { padding: 0 28px 0 25px; }
.tabs .on { background: #f3f3f3; color: #217346; }
.context-tabs { width: 222px; background: #1a5c38; display: flex; flex-direction: column; position: relative; }
.context-name { flex: 1; text-align: center; font-size: 12px; line-height: 38px; color: #9bd0b0; }
.context-tabs .tabs a { padding: 0 16px 0 12px; }
.title-rest { flex: 1; display: flex; flex-direction: column; position: relative; }
.title-row { flex: 1; display: flex; align-items: center; padding: 0 1px 0 30px; }
.doc { margin-right: auto; }
.user { font-size: 12px; }
.avatar { width: 30px; height: 30px; border-radius: 50%; background: #d0d0d0; color: #666; font-size: 12px; line-height: 30px; text-align: center; margin: 0 14px 0 11px; }
.winbtns { display: flex; padding-bottom: 4px; }
.winbtns button { width: 57px; height: 30px; }
.tell-row { height: 38px; display: flex; align-items: center; gap: 17px; padding: 0 20px 0 21px; }
.comment { margin-left: auto; }

/* ribbon */
.ribbon { flex: none; display: flex; height: 115px; background: #f3f3f3; border-bottom: 1px solid #cfcfcf; position: relative; }
.group { flex: none; display: flex; flex-direction: column; position: relative; }
.group::after { content: ""; position: absolute; right: 0; top: 5px; bottom: 5px; width: 1px; background: #8a8a8a; }
.g-clip { width: 205px; } .g-font { width: 288px; } .g-align { width: 349px; } .g-num { width: 194px; } .g-styles { width: 239px; } .g-cells { width: 176px; } .g-edit { width: 249px; } .g-add { width: 77px; }
.body { flex: 1; display: flex; align-items: flex-start; min-height: 0; white-space: nowrap; }
.label { height: 20px; font-size: 12px; line-height: 22px; text-align: center; position: relative; padding-right: 22px; flex: none; }
.g-styles .label, .g-cells .label, .g-edit .label, .g-add .label { padding: 0; }
.launch { position: absolute; right: 4px; top: 6px; }
.launch svg { width: 11px; height: 11px; }
.big { flex-direction: column; justify-content: flex-start; padding-top: 9px; }
.big > span { text-align: center; }
.big > .ch { margin-top: 3px; }
.g-clip .body { padding-left: 18px; gap: 13px; }
.stack { display: flex; flex-direction: column; padding-top: 3px; }
.stack button { justify-content: flex-start; height: 29px; gap: 5px; }
.stack .far { margin-left: 8px; }
.rows { display: flex; flex-direction: column; align-items: flex-start; gap: 9px; padding-top: 13px; }
.line { display: flex; align-items: center; height: 29px; }
.g-font .body { padding-left: 8px; }
.combos { gap: 2px; padding-left: 2px; }
.combo { height: 29px; background: #fff; border: 1px solid #8f8f8f; justify-content: space-between; padding: 0 3px 0 3px; }
.combo .ch { color: #666; }
.w-font { width: 144px; } .w-size { width: 62px; } .w-num { width: 173px; }
.ib { width: 30px; height: 29px; }
.slim { width: 28px; }
.dd { width: 15px; height: 29px; }
.grow { font-size: 17px; color: #555; width: 28px; }
.grow svg { align-self: flex-start; margin-top: 6px; }
.glyph { font-size: 15px; font-weight: 600; color: #444; }
.serif { font-family: "Liberation Serif", serif; font-weight: 700; font-size: 17px; }
.fontcolor { font-size: 17px; line-height: 17px; font-weight: 600; color: #555; flex-direction: column; margin-left: 4px; }
.fontcolor::after { content: ""; width: 20px; height: 5px; background: #f00; }
.sep { width: 10px; height: 28px; background: linear-gradient(#d0d0d0, #d0d0d0) center / 1px 100% no-repeat; }
.left .sep, .g-num .sep { width: 8px; }
.sep.tall { height: 70px; margin-top: 12px; }
.pressed { background: #c6c6c6; border: 1px solid #8a8a8a; }
.al { width: 18px; height: 19px; fill: none; stroke: #666; stroke-width: 1; }
.al .arr { stroke: #4a80ba; stroke-width: 2; }
.g-align .body { padding-left: 9px; }
.left { width: 156px; }
.text { gap: 5px; padding-left: 4px; }
.text .far { margin-left: 9px; }
.g-num .body { padding-left: 9px; }
.g-num .dd { width: 17px; }
.pct { font-size: 18px; color: #555; }
.dec { fill: #444; }
.g-styles .body { padding-left: 12px; gap: 6px; }
.g-cells .body { padding-left: 14px; gap: 8px; }
.g-cells .big { min-width: 43px; }
.g-edit .body { padding-left: 15px; }
.g-edit .stack { width: 115px; }
.g-edit .big + .big { margin-left: 7px; }
.g-add .body { justify-content: center; }
.collapse { position: absolute; right: 10px; bottom: 4px; }

/* workbook */
.work { flex: 1; min-height: 0; display: flex; }
.book { flex: 1; min-width: 0; display: flex; flex-direction: column; }
.grid-area { flex: 1; min-height: 0; display: flex; }
.sheet { flex: 1; min-width: 0; position: relative; overflow: hidden; background: #fff; border-right: 1px solid #999; border-bottom: 1px solid #999; }
table { table-layout: fixed; border-collapse: separate; border-spacing: 0; width: 1537px; font: 24px/34px Lato, "Open Sans", sans-serif; color: #000; }
.c-row { width: 51px; } .c-a { width: 171px; } .c-b { width: 155px; } .c-n { width: 116px; }
tr { height: 35px; }
th, td { padding: 0; height: 35px; border-right: 1px solid #d4d4d4; border-bottom: 1px solid #d4d4d4; white-space: nowrap; }
th { font-size: 23px; font-weight: 400; background: #e6e6e6; text-align: center; border-color: #bcbcbc; }
thead th { border-bottom-color: #999; }
tbody th { border-right-color: #999; }
.corner { text-align: right; padding-right: 3px; line-height: 0; }
th.sel { background: #d2d2d2; color: #1e6b41; }
td { padding: 0 4px; text-align: left; }
.head { background: #d9e1f2; font-size: 25px; font-weight: 700; border-color: #d9e1f2; border-bottom-color: #8ea9db; }
.piv td:nth-child(2), .piv td:nth-child(3) { border-color: transparent; }
.piv td:nth-child(3) { text-align: right; border-right-color: #d4d4d4; }
.piv.last td { border-bottom-color: #d4d4d4; }
.picked { position: relative; }
.picked::before { content: ""; position: absolute; inset: -2px; border: 2px solid #217346; z-index: 1; }
.picked::after { content: ""; position: absolute; right: -3px; bottom: -3px; width: 6px; height: 6px; background: #217346; border: solid #fff; border-width: 1px 0 0 1px; z-index: 2; }
.filter { position: absolute; right: 0; bottom: 1px; width: 20px; height: 21px; background: #f7f8fb; border: 1px solid #aab; }
.short, .short th, .short td { height: 10px; line-height: 9px; }
.short th { vertical-align: top; border-bottom: 0; }
.short th div { height: 8px; overflow: hidden; border-bottom: 1px solid #bcbcbc; line-height: 24px; }
.chart { position: absolute; left: 429px; top: 122px; background: #738fa8; border: 2px solid #ccd6df; }
.chart > svg { display: block; }
.ctitle { font: 27px Lato, sans-serif; text-anchor: middle; }
.clabel { font: 22px Lato, sans-serif; text-anchor: middle; }
.tip { position: absolute; left: 110px; top: 166px; height: 26px; padding: 0 5px; background: #fff; border: 1px solid #ddd; box-shadow: 3px 3px 3px rgba(0, 0, 0, .45); line-height: 24px; color: #555; white-space: nowrap; }

/* scroll bars */
.vscroll { width: 19px; display: flex; flex-direction: column; margin: 2px 3px 0; }
.vscroll button, .hscroll button { width: 19px; height: 19px; background: #fff; border: 1px solid #8f8f8f; flex: none; }
.sa { width: 10px; height: 10px; fill: #111; }
.track { flex: 1; display: flex; background: #f3f3f3; }
.vscroll .track { flex-direction: column; padding-top: 59px; }
.thumb { flex: 1; background: #fff; border: 1px solid #8f8f8f; }

/* sheet tabs */
.sheetbar { flex: none; display: flex; height: 28px; align-items: center; padding-right: 25px; font-size: 16px; color: #444; }
.nav { width: 28px; height: 24px; }
.nav:first-child { margin-left: 17px; }
.dots { width: 30px; color: #217346; font-weight: 700; }
.sheets { display: flex; align-self: flex-start; height: 24px; }
.sheets a { line-height: 22px; text-align: center; border-left: 1px solid #999; white-space: nowrap; }
.t1 { width: 234px; } .t2 { width: 140px; } .t3 { width: 153px; } .t4 { width: 179px; }
.sheets .t4 { border-right: 1px solid #999; padding-right: 6px; }
.sheets .on { background: #fff; color: #217346; font-size: 15px; font-weight: 700; border-bottom: 2px solid #217346; margin-top: -1px; height: 26px; }
.more { margin-left: 7px; }
.add { width: 30px; }
.grip { margin: 0 14px 0 13px; }
.hscroll { flex: 1; display: flex; }
.hscroll .track { padding-right: 44px; }

/* field pane */
.pane { width: 438px; border-left: 1px solid #bdbdbd; padding: 0 15px; display: flex; flex-direction: column; }
.pane-head { display: flex; align-items: center; height: 56px; }
.pane-head h2 { font-size: 26px; font-weight: 300; margin-right: auto; padding-top: 2px; }
.pane-head button { width: 52px; }
.pane-head button:last-child { width: 26px; margin-left: 12px; }
.choose { display: flex; align-items: center; justify-content: space-between; height: 36px; }
.gear { width: 56px; height: 36px; background: #fff; border: 1px solid #999; gap: 11px; padding-left: 8px; }
.dn { width: 10px; height: 6px; fill: #111; }
.find { display: flex; align-items: center; height: 30px; margin-top: 15px; background: #fff; border: 1px solid #bdbdbd; padding: 0 4px 0 7px; }
.find input { flex: 1; border: 0; outline: 0; padding: 0 0 2px; background: none; }
::placeholder { color: #707070; opacity: 1; }
.fields { display: flex; height: 242px; margin-top: 20px; background: #fff; border: 1px solid #8f8f8f; overflow: hidden; flex: none; }
.list { flex: 1; margin-top: -9px; padding-left: 4px; }
.list label { display: flex; height: 27px; gap: 7px; }
.list span { padding-top: 2px; }
input[type=checkbox] { appearance: none; width: 16px; height: 16px; margin: 0; background: #fff; border: 1px solid #666; flex: none; }
input[type=checkbox]:checked { background: #217346; border-color: #185c37; display: grid; place-items: center; }
input[type=checkbox]:checked::after { content: ""; width: 9px; height: 5px; border: solid #fff; border-width: 0 0 2px 2px; transform: rotate(-45deg); margin-bottom: 3px; }
.fun { width: 14px; height: 14px; margin: 4px 5px 0 auto; }
.fields .vscroll { margin: 2px 1px; }
.fields .track { padding: 49px 0 51px; }
.split { margin: 17px 0 5px; border-top: 2px dotted #d2d2d2; }
.drag { padding: 0 5px; }
.areas { display: grid; grid-template-columns: 201px 1fr; margin: 19px -1px 0 4px; }
.area { padding: 0 7px 7px 0; }
.area h3 { display: flex; align-items: center; gap: 9px; font-size: 14px; height: 28px; padding: 0 0 4px 5px; }
.area.r { border-left: 1px solid #b5b5b5; padding: 0 0 7px 2px; }
.area.r h3 { gap: 8px; }
.area.b { border-top: 1px solid #b5b5b5; padding-top: 6px; padding-bottom: 0; }
.drop { height: 99px; background: #fff; padding: 2px 1px; }
.drop button { width: 100%; height: 26px; border: 1px solid #b0b0b0; justify-content: space-between; padding: 0 10px 0 8px; }
.defer { display: flex; justify-content: space-between; align-items: center; margin: 24px -1px 0 8px; }
.defer label { display: flex; gap: 8px; align-items: center; }
.defer button { width: 63px; height: 32px; background: #fff; border: 1px solid #cfcfcf; color: #d0d0d0; }

/* status bar */
.status { flex: none; height: 28px; display: flex; align-items: center; background: #f3f3f3; border-top: 1px solid #c6c6c6; border-bottom: 1px solid #a9bcc4; font-size: 12px; padding: 0 11px 0 14px; }
.ready { width: 60px; }
.acc { margin: 0 auto 0 3px; }
.views { display: flex; height: 26px; }
.views button { width: 50px; }
.views .on { background: #c6c6c6; }
.z { margin: 0 7px; }
.zoom { appearance: none; width: 125px; height: 14px; margin: 0; background: linear-gradient(#333, #333) center / 100% 1px no-repeat, linear-gradient(#333, #333) center / 1px 7px no-repeat; }
.zoom::-webkit-slider-thumb { appearance: none; width: 6px; height: 14px; background: #444; }
.pc { margin-left: 8px; }

/* taskbar */
.taskbar { flex: none; height: 59px; display: flex; align-items: center; background: #cee7ed; }
.weather { margin: 0 0 8px 24px; }
.start { margin-left: 206px; }
.search { display: flex; align-items: center; width: 274px; height: 38px; border-radius: 19px; background: #eff8fa; box-shadow: 0 1px 1px #9fb4bb; margin-left: 17px; padding: 0 8px 0 13px; }
.search input { flex: 1; min-width: 0; border: 0; outline: 0; background: none; padding: 0 0 0 12px; font-size: 16px; }
.apps { display: flex; margin-left: 2px; }
.apps button { width: 55px; height: 48px; position: relative; }
.apps svg { width: 30px; height: 30px; }
.apps em { position: absolute; right: 7px; top: -2px; width: 20px; height: 20px; border-radius: 50%; background: #23798a; color: #fff; font-style: normal; font-size: 14px; }
.run::after { content: ""; position: absolute; bottom: 0; width: 7px; height: 4px; border-radius: 2px; background: #7c8f98; }
.apps .active { background: #eff8fa; border-radius: 5px; width: 47px; margin: 0 4px; box-shadow: 0 0 0 1px #dfeaee; }
.apps .active::after { width: 20px; background: #23798a; }
.tray { margin-left: auto; display: flex; align-items: center; padding-right: 25px; }
.tray svg { margin-left: 10px; flex: none; }
.lang { margin: 0 14px 0 25px; text-align: center; }
.tray > svg:first-child + svg { margin-left: 22px; }
.clock { text-align: right; margin-left: 19px; font-size: 15px; }
.clock + svg { margin-left: 12px; }
.tray .pilot { margin-left: 22px; }
```
